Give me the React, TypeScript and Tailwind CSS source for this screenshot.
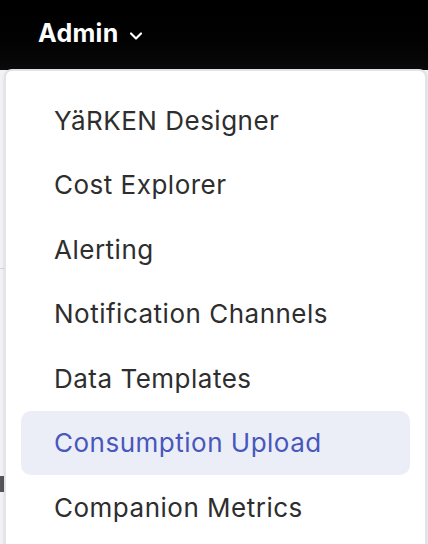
import { ChevronDown } from "lucide-react"

const items = [
  "YäRKEN Designer",
  "Cost Explorer",
  "Alerting",
  "Notification Channels",
  "Data Templates",
  "Consumption Upload",
  "Companion Metrics",
]

const active = "Consumption Upload"

export default function App() {
  return (
    <div className="relative h-[544px] w-[428px] overflow-hidden bg-[#f2f2f4] font-['Inter',sans-serif]">
      <header className="flex h-[70px] items-center bg-gradient-to-b from-black to-[#0b0b0b] pl-[38px]">
        <button className="flex items-center gap-[7px] pb-[2px] text-[25px] font-bold tracking-[0.3px] text-white">
          Admin
          <ChevronDown className="mt-[3px] h-[20px] w-[20px]" strokeWidth={2.6} />
        </button>
      </header>

      {/* page behind the menu, only a sliver shows on the left */}
      <div className="mt-[198px] h-[1px] w-[4px] bg-[#d4d4d8]" />
      <div className="mt-[207px] h-[16px] w-[4px] bg-[#55555a]" />

      <div className="absolute left-[4px] top-[69px] h-[500px] w-[423px] rounded-[8px] border-2 border-[#e2e2e8] bg-white px-[15px] pt-[17px] shadow-sm">
        <ul className="flex flex-col">
          {items.map(item => (
            <li
              key={item}
              className={
                item === active
                  ? "flex h-[64.5px] items-center rounded-[10px] bg-[#ebeef6] pl-[33px] text-[26px] tracking-[0.5px] text-[#4757bd]"
                  : "flex h-[64.5px] items-center rounded-[10px] pl-[33px] text-[26px] tracking-[0.5px] text-[#2e2e2e]"
              }
            >
              {item}
            </li>
          ))}
        </ul>
      </div>
    </div>
  )
}
